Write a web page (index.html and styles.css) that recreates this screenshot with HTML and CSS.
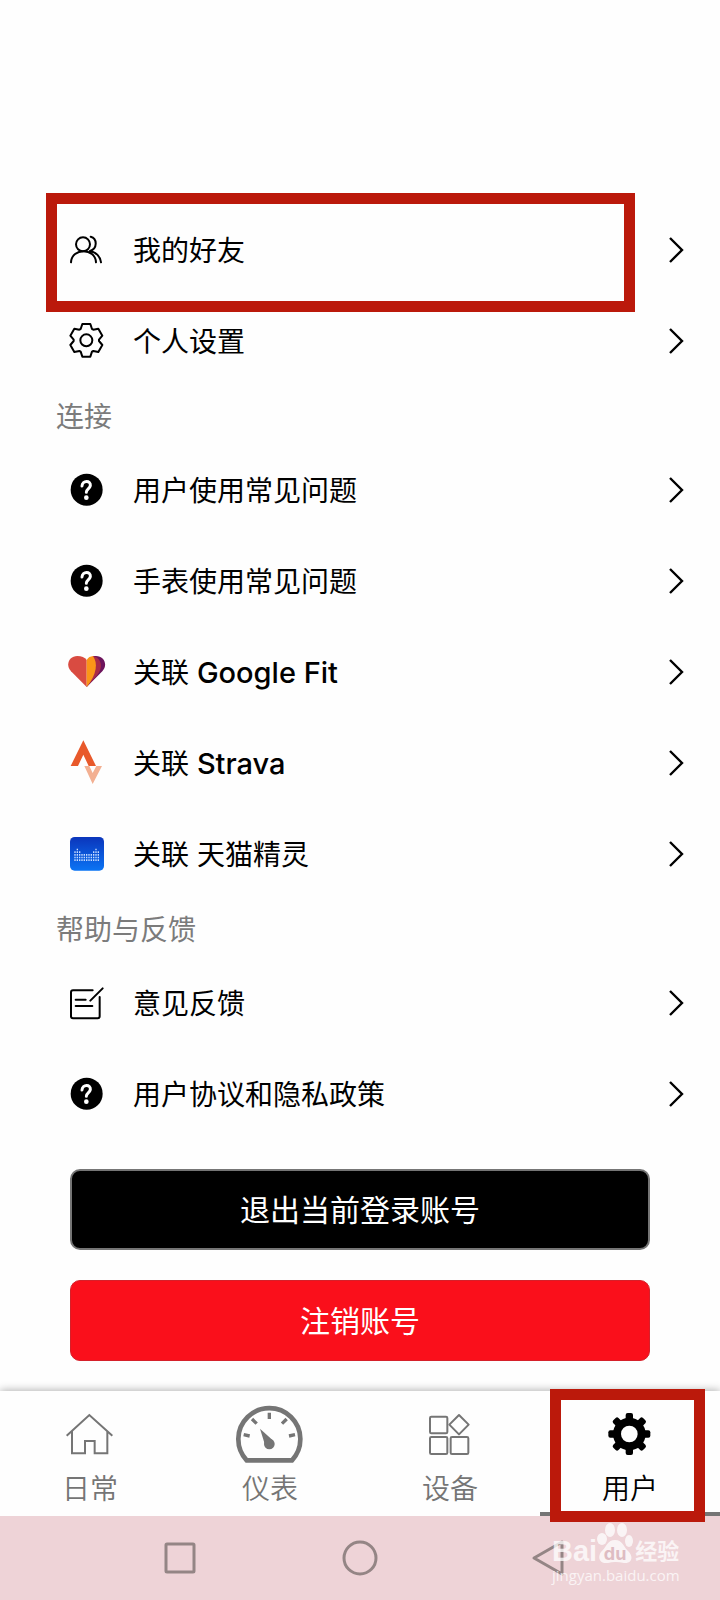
FILE: index.html
```html
<!DOCTYPE html>
<html lang="zh-CN">
<head>
<meta charset="utf-8">
<meta name="viewport" content="width=device-width, initial-scale=1">
<title>用户</title>
<link rel="stylesheet" href="styles.css">
</head>
<body>
<svg class="defs" aria-hidden="true">
  <symbol id="chevron" viewBox="0 0 16 28"><path d="M2 2L14 14L2 26" fill="none" stroke="#000" stroke-width="2.4"/></symbol>
  <symbol id="question" viewBox="0 0 120 120">
    <circle cx="62" cy="59" r="48"/>
    <path d="M48 48C49 30 75 30 73 47C71 57 61 57 61 67" fill="none" stroke="#fff" stroke-width="9" stroke-linecap="round"/>
    <circle cx="61" cy="83" r="7" fill="#fff"/>
  </symbol>
</svg>
<main class="content">
  <a class="row" href="#friends">
    <svg class="icon line" viewBox="0 0 120 120"><circle cx="51" cy="43" r="21"/><path d="M15 97C17 53 88 53 90 97M74 20C95 26 94 57 72 63C91 67 102 79 105 97"/></svg>
    <span class="name">我的好友</span>
    <svg class="chevron"><use href="#chevron"/></svg>
    <span class="mark mark-row"></span>
  </a>
  <a class="row" href="#settings">
    <svg class="icon line" viewBox="0 0 120 120"><path d="M44 24L49 9H73L78 24L82 26L97 23L109 44L99 56V60L109 72L97 93L82 90L78 92L73 107H49L44 92L40 90L25 93L13 72L23 60V56L13 44L25 23L40 26Z"/><circle cx="61" cy="58" r="18"/></svg>
    <span class="name">个人设置</span>
    <svg class="chevron"><use href="#chevron"/></svg>
  </a>
  <h2 class="section">连接</h2>
  <a class="row" href="#faq">
    <svg class="icon"><use href="#question"/></svg>
    <span class="name">用户使用常见问题</span>
    <svg class="chevron"><use href="#chevron"/></svg>
  </a>
  <a class="row" href="#watch-faq">
    <svg class="icon"><use href="#question"/></svg>
    <span class="name">手表使用常见问题</span>
    <svg class="chevron"><use href="#chevron"/></svg>
  </a>
  <a class="row" href="#google-fit">
    <svg class="icon" viewBox="0 0 120 120">
      <path fill="#d94b41" d="M62 105L15 58C-3 38 10 12 34 12C47 12 56 16 62 24V105Z"/>
      <path fill="#6d145c" d="M62 105L109 58C127 38 114 12 90 12L82 12L74 60Z"/>
      <path fill="#a92a47" d="M62 105L93 70C112 48 108 20 82 12L70 50Z"/>
      <path fill="#fb9517" d="M62 105V24C67 16 73 13 81 12C96 34 93 66 62 105Z"/>
    </svg>
    <span class="name">关联 <span class="brand-name">Google Fit</span></span>
    <svg class="chevron"><use href="#chevron"/></svg>
  </a>
  <a class="row" href="#strava">
    <svg class="icon icon-tall" viewBox="0 -12 120 144">
      <path fill="#e8592b" d="M52 -8L14 69H36L52 35L68 69H90Z"/>
      <path fill="#f3b092" d="M55 69H70L80 90L91 69H108L80 123Z"/>
    </svg>
    <span class="name">关联 <span class="brand-name">Strava</span></span>
    <svg class="chevron"><use href="#chevron"/></svg>
  </a>
  <a class="row" href="#genie">
    <svg class="icon" viewBox="0 0 120 120">
      <defs><linearGradient id="blue" x1="0" y1="0" x2="0" y2="1"><stop offset="0" stop-color="#0b35bb"/><stop offset="1" stop-color="#0b74f4"/></linearGradient></defs>
      <rect x="12" y="9" width="102" height="101" rx="14" fill="url(#blue)"/>
      <path fill="none" stroke="#c9ddff" stroke-width="4" stroke-dasharray="5 3" d="M27 81V49M34 81V41M41 81V49M48 81V57M55 81V57M62 81V57M69 81V57M76 81V57M83 81V49M90 81V41M97 81V49"/>
    </svg>
    <span class="name">关联 天猫精灵</span>
    <svg class="chevron"><use href="#chevron"/></svg>
  </a>
  <h2 class="section">帮助与反馈</h2>
  <a class="row" href="#feedback">
    <svg class="icon line" viewBox="0 0 120 120"><path d="M80 22H21Q15 22 15 28V100Q15 106 21 106H95Q101 106 101 100V42M110 16L73 53M29 50H59M29 69H79"/></svg>
    <span class="name">意见反馈</span>
    <svg class="chevron"><use href="#chevron"/></svg>
  </a>
  <a class="row" href="#policy">
    <svg class="icon"><use href="#question"/></svg>
    <span class="name">用户协议和隐私政策</span>
    <svg class="chevron"><use href="#chevron"/></svg>
  </a>
  <div class="actions">
    <button class="btn btn-black" type="button">退出当前登录账号</button>
    <button class="btn btn-red" type="button">注销账号</button>
  </div>
</main>
<nav class="tabs">
  <a class="tab" href="#daily">
    <svg class="tab-icon" viewBox="0 0 216 180" fill="none" stroke="#757575" stroke-width="6"><path d="M38 95L106 33L175 95M54 82V148H93V111H122V148H160V82"/></svg>
    <span>日常</span>
  </a>
  <a class="tab" href="#meter">
    <svg class="tab-icon" viewBox="0 0 216 180" fill="none" stroke="#757575">
      <path stroke-width="14" d="M38 169A93 93 0 1 1 174 169Z"/>
      <path stroke-width="10" d="M106 26V45M54 45L68 59M158 45L144 59M29 92L47 96M183 92L165 96"/>
      <path fill="#757575" stroke="none" d="M78 74L118 110L94 126Z"/><circle cx="106" cy="120" r="16" fill="#757575" stroke="none"/>
    </svg>
    <span>仪表</span>
  </a>
  <a class="tab" href="#device">
    <svg class="tab-icon" viewBox="0 0 216 180" fill="none" stroke="#757575" stroke-width="6"><rect x="48" y="38" width="52" height="50" rx="4"/><rect x="48" y="99" width="52" height="51" rx="4"/><rect x="110" y="99" width="53" height="51" rx="4"/><path stroke-linejoin="round" d="M135 33L164 62L135 91L106 62Z"/></svg>
    <span>设备</span>
  </a>
  <a class="tab tab-active" href="#user" aria-current="page">
    <svg class="tab-icon" viewBox="0 0 216 180">
      <g id="teeth"><rect x="95" y="27" width="22" height="126" rx="6"/><rect x="43" y="79" width="126" height="22" rx="6"/></g>
      <use href="#teeth" transform="rotate(45 106 90)"/>
      <circle cx="106" cy="90" r="49"/><circle cx="106" cy="90" r="25" fill="#fff"/>
    </svg>
    <span>用户</span>
    <span class="mark mark-tab"></span>
  </a>
</nav>
<footer class="system">
  <button class="sys" type="button" aria-label="最近任务"><svg viewBox="0 0 48 48"><rect x="10" y="10" width="28" height="28" rx="1"/></svg></button>
  <button class="sys" type="button" aria-label="主屏幕"><svg viewBox="0 0 48 48"><circle cx="24" cy="24" r="16"/></svg></button>
  <button class="sys" type="button" aria-label="返回"><svg viewBox="0 0 48 48"><path d="M46 8V40L18 24Z"/></svg></button>
  <div class="watermark">
    <div class="brand">
      <span class="latin">Bai</span>
      <span class="paw">
        <svg viewBox="0 0 36 42" fill="#fff"><ellipse cx="5" cy="16" rx="5" ry="6"/><ellipse cx="13" cy="7" rx="5" ry="7"/><ellipse cx="25" cy="7" rx="5" ry="7"/><ellipse cx="32" cy="18" rx="4" ry="6"/><path d="M18 17C26 17 27 25 32 29C37 35 34 41 27 40Q18 38 11 40C3 41 0 35 4 29C9 25 10 17 18 17Z"/></svg>
        <span class="du">du</span>
      </span>
      <span class="cjk">经验</span>
    </div>
    <div class="site">jingyan.baidu.com</div>
  </div>
</footer>
</body>
</html>
```
FILE: styles.css
```css
* { box-sizing: border-box; }
body {
  margin: 0;
  min-height: 100vh;
  display: flex;
  flex-direction: column;
  background: #fefefe;
  color: #000;
  font-family: Inter, "Noto Sans CJK SC", sans-serif;
}
a { color: inherit; text-decoration: none; }
.defs { display: none; }
.content { flex: 1; padding-top: 204px; }
.row {
  position: relative;
  display: flex;
  align-items: center;
  height: 91px;
  padding: 0 36px 0 66px;
}
.icon { width: 40px; height: 40px; flex: none; }
.icon-tall { height: 48px; }
.line { fill: none; stroke: #000; stroke-width: 6; stroke-linejoin: round; stroke-linecap: round; }
.name { flex: 1; margin-left: 27px; padding-top: 2px; font-size: 28px; line-height: 40px; font-weight: 400; }
.brand-name { font-size: 29px; font-weight: 500; }
.chevron { width: 16px; height: 28px; flex: none; }
.section {
  margin: 0;
  padding: 4px 0 0 56px;
  font-size: 28px;
  line-height: 54px;
  font-weight: 400;
  color: #7b7b7b;
}
.actions { display: grid; gap: 30px; padding: 30px 70px; }
.btn {
  height: 81px;
  border: 2px solid #757575;
  border-radius: 10px;
  color: #fff;
  font: 400 30px/40px Inter, "Noto Sans CJK SC", sans-serif;
}
.btn-black { background: #000; }
.btn-red { background: #fa0f1b; border: 1px solid #d5202a; }
.tabs {
  display: grid;
  grid-template-columns: repeat(4, 1fr);
  background: #fefefe;
  box-shadow: 0 -1px 8px rgba(0, 0, 0, 0.3);
}
.tab {
  position: relative;
  display: flex;
  flex-direction: column;
  align-items: center;
  gap: 2px;
  padding-top: 13px;
  border-bottom: 4px solid transparent;
  color: #757575;
  font-size: 28px;
  line-height: 46px;
  font-weight: 350;
}
.tab-active { color: #000; border-color: #757575; }
.tab-icon { width: 72px; height: 60px; }
.mark { position: absolute; border: 11px solid #bb190b; pointer-events: none; }
.mark-row { top: -11px; bottom: -17px; left: 46px; right: 85px; }
.mark-tab { top: -2px; bottom: -10px; left: 10px; right: 15px; z-index: 1; }
.system {
  position: relative;
  display: grid;
  grid-template-columns: repeat(3, 1fr);
  height: 84px;
  padding: 0 12.5%;
  background: #eed3d7;
}
.sys { display: flex; align-items: center; justify-content: center; padding: 0; border: 0; background: none; }
.sys svg { width: 48px; height: 48px; fill: none; stroke: #948585; stroke-width: 3; stroke-linejoin: round; }
.watermark { position: absolute; right: 40px; top: 7px; width: 128px; color: #fff; opacity: 0.75; }
.brand { display: flex; align-items: flex-end; height: 42px; }
.latin { font-family: "Liberation Sans", sans-serif; font-size: 29px; line-height: 28px; font-weight: 700; }
.paw { position: relative; width: 36px; height: 42px; margin-right: 2px; flex: none; }
.paw svg { width: 36px; height: 42px; }
.du { position: absolute; left: 0; right: 0; bottom: 1px; text-align: center; color: #d9b5bb; font-size: 18px; line-height: 20px; font-weight: 700; }
.cjk { font-size: 22px; line-height: 28px; font-weight: 700; white-space: nowrap; }
.site { font-family: "Open Sans", sans-serif; font-size: 15px; line-height: 20px; }
```
